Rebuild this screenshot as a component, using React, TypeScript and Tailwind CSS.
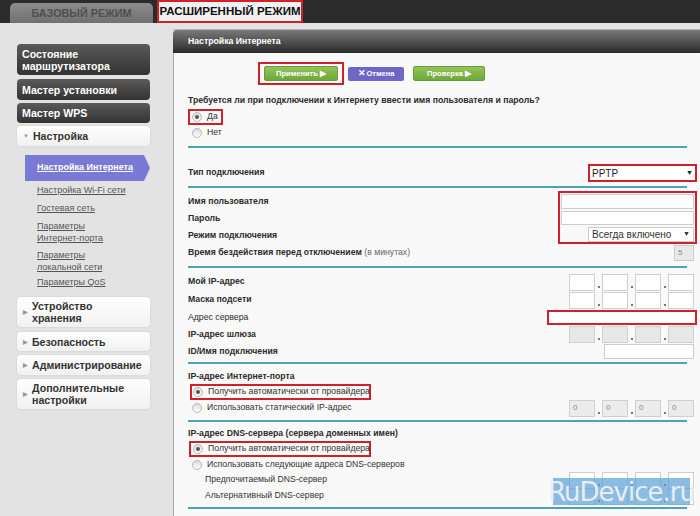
import React from "react";

function Radio({ checked }: { checked?: boolean }) {
  return (
    <span className="inline-flex w-[10px] h-[10px] rounded-full border border-[#b8b8b8] bg-gradient-to-b from-[#dcdcdc] to-white items-center justify-center shrink-0">
      {checked && <span className="w-[4px] h-[4px] rounded-full bg-[#555]" />}
    </span>
  );
}

function Teal() {
  return <div className="h-[2px] bg-[#4aa3b8] mr-[7px]" />;
}

function IpBoxes({ bg = "bg-white", zero = false }: { bg?: string; zero?: boolean }) {
  return (
    <div className="flex items-end">
      {[0, 1, 2, 3].map((i) => (
        <React.Fragment key={i}>
          {i > 0 && (
            <span className="w-[7px] h-[17px] flex items-end justify-center pb-[3px]">
              <span className="w-[2px] h-[2px] bg-[#777]" />
            </span>
          )}
          <div
            className={`w-[26px] h-[17px] border border-[#cfcfcf] ${bg} text-[8px] text-[#888] pl-[3px] flex items-center`}
          >
            {zero ? "0" : ""}
          </div>
        </React.Fragment>
      ))}
    </div>
  );
}

function Row({ label, children, h = "h-[17px]", bold = true, extra }: { label: string; children?: React.ReactNode; h?: string; bold?: boolean; extra?: string }) {
  return (
    <div className={`flex items-center justify-between ${h}`}>
      <span className={`text-[8.7px] whitespace-nowrap text-[#2b2b2b] ${bold ? "font-bold" : ""}`}>
        {label}
        {extra && <span className="font-normal text-[#666]"> {extra}</span>}
      </span>
      {children}
    </div>
  );
}

function DarkBtn({ children, h }: { children: React.ReactNode; h: string }) {
  return (
    <div className={`${h} rounded-[4px] bg-gradient-to-b from-[#5a5a5a] to-[#333] text-white font-bold text-[10.6px] leading-[12px] pl-[5px] flex items-center`}>
      <div>{children}</div>
    </div>
  );
}

function LightBtn({ children, h, open }: { children: React.ReactNode; h: string; open?: boolean }) {
  return (
    <div className={`${h} rounded-[4px] bg-gradient-to-b from-white to-[#f1f1f1] shadow-[0_0_2px_rgba(0,0,0,0.12)] text-[#333] font-bold text-[10.6px] leading-[12px] pl-[6px] flex items-center gap-[4px]`}>
      <span className="text-[6px] text-[#999]">{open ? "▼" : "▶"}</span>
      <div className="whitespace-nowrap">{children}</div>
    </div>
  );
}

function SubLink({ children, mt }: { children: React.ReactNode; mt: string }) {
  return (
    <div className={`${mt} ml-[20px] text-[9px] leading-[12px] text-[#555] underline`}>{children}</div>
  );
}

function GreenBtn({ children, w }: { children: React.ReactNode; w: string }) {
  return (
    <div className={`${w} h-[15px] rounded-[2px] bg-gradient-to-b from-[#93c45a] to-[#6fa83a] border border-[#6a9c3a] text-white text-[7.5px] font-bold flex items-center justify-center`}>
      {children}
    </div>
  );
}

const txt = "text-[8.7px] text-[#333] whitespace-nowrap";

export default function App() {
  return (
    <div className="w-[700px] h-[516px] overflow-hidden bg-[#e3e3e3] font-['Liberation_Sans',Arial,sans-serif] relative">
      {/* top bar */}
      <div className="h-[23px] bg-[#2b2b2b] flex items-end pl-[10px] gap-[4px]">
        <div className="w-[143px] h-[20px] rounded-t-[5px] bg-gradient-to-b from-[#8c8c8c] to-[#707070] text-[#4f4f4f] font-bold text-[10.8px] flex items-center justify-center">
          БАЗОВЫЙ РЕЖИМ
        </div>
        <div className="w-[146px] h-[23px] border-2 border-[#d0202c] bg-[#f0f0f0] text-[#111] font-bold text-[11.5px] flex items-center justify-center">
          РАСШИРЕННЫЙ РЕЖИМ
        </div>
      </div>

      <div className="flex">
        {/* sidebar */}
        <div className="w-[173px] shrink-0 pt-[21px] pl-[17px] pr-[23px]">
          <DarkBtn h="h-[31px]">
            Состояние
            <br />
            маршрутизатора
          </DarkBtn>
          <div className="mt-[4px]">
            <DarkBtn h="h-[21px]">Мастер установки</DarkBtn>
          </div>
          <div className="mt-[3px]">
            <DarkBtn h="h-[20px]">Мастер WPS</DarkBtn>
          </div>
          <div className="mt-[3px]">
            <LightBtn h="h-[20px]" open>
              Настройка
            </LightBtn>
          </div>
          <div className="mt-[9px] ml-[8px] h-[26px] flex">
            <div className="flex-1 bg-[#7b79d6] flex items-center pl-[12px] text-white font-bold text-[9px] underline">
              Настройка Интернета
            </div>
            <svg width="6" height="26" viewBox="0 0 6 26" className="shrink-0">
              <polygon points="0,0 6,13 0,26" fill="#7b79d6" />
            </svg>
          </div>
          <SubLink mt="mt-[3px]">Настройка Wi-Fi сети</SubLink>
          <SubLink mt="mt-[6px]">Гостевая сеть</SubLink>
          <SubLink mt="mt-[6px]">
            Параметры
            <br />
            Интернет-порта
          </SubLink>
          <SubLink mt="mt-[5px]">
            Параметры
            <br />
            локальной сети
          </SubLink>
          <SubLink mt="mt-[3px]">Параметры QoS</SubLink>
          <div className="mt-[9px]">
            <LightBtn h="h-[30px]">
              Устройство
              <br />
              хранения
            </LightBtn>
          </div>
          <div className="mt-[5px]">
            <LightBtn h="h-[19px]">Безопасность</LightBtn>
          </div>
          <div className="mt-[4px]">
            <LightBtn h="h-[20px]">Администрирование</LightBtn>
          </div>
          <div className="mt-[4px]">
            <LightBtn h="h-[30px]">
              Дополнительные
              <br />
              настройки
            </LightBtn>
          </div>
        </div>

        {/* main panel */}
        <div className="flex-1 pt-[6px]">
          <div className="h-[1px] bg-[#b5b5b5]" />
          <div className="h-[23px] rounded-tl-[4px] bg-gradient-to-b from-[#7a7a7a] to-[#2c2c2c] text-white font-bold text-[8.7px] flex items-center pl-[15px]">
            Настройка Интернета
          </div>
          <div className="h-[470px] bg-[#f9f9f9] border-l border-[#a8a8a8] pl-[14px] pr-[6px]">
            {/* buttons */}
            <div className="pt-[9px] flex items-center gap-[4px] pl-[70px]">
              <div className="border-2 border-[#d0202c] h-[23px] px-[4px] flex items-center">
                <GreenBtn w="w-[74px]">Применить ▶</GreenBtn>
              </div>
              <div className="w-[56px] h-[14px] rounded-[2px] bg-[#6f66c8] text-white text-[7.5px] font-bold flex items-center justify-center">
                <span className="text-[9px] mr-[1px]">✕</span>Отмена
              </div>
              <div className="ml-[5px]">
                <GreenBtn w="w-[72px]">Проверка ▶</GreenBtn>
              </div>
            </div>
            <div className="mt-[10px] h-[12px] flex items-center text-[8.7px] text-[#2b2b2b] font-bold whitespace-nowrap">
              Требуется ли при подключении к Интернету ввести имя пользователя и пароль?
            </div>
            <div className={`mt-[2px] h-[16px] w-[35px] border-2 border-[#d0202c] flex items-center gap-[5px] pl-[2px] ${txt}`}>
              <Radio checked />
              Да
            </div>
            <div className={`h-[16px] flex items-center gap-[5px] pl-[4px] ${txt}`}>
              <Radio />
              Нет
            </div>
            <div className="mt-[5px]">
              <Teal />
            </div>

            {/* connection type */}
            <div className="mt-[16px]">
              <Row label="Тип подключения" h="h-[18px]">
                <div className="w-[109px] h-[18px] border-2 border-[#d0202c] bg-white flex items-center justify-between px-[2px] text-[10px] text-[#222] mr-[-3px]">
                  PPTP<span className="text-[7px]">▼</span>
                </div>
              </Row>
            </div>
            <div className="mt-[4px]">
              <Teal />
            </div>

            {/* user / password */}
            <div className="mt-[3px] flex justify-between">
              <div className="pt-[2px]">
                <Row label="Имя пользователя" />
                <Row label="Пароль" />
                <Row label="Режим подключения" />
              </div>
              <div className="w-[139px] h-[53px] border-2 border-[#d0202c] mr-[-3px] flex flex-col items-end pr-[1px] pt-[1px] gap-[2px]">
                <div className="w-[133px] h-[15px] border border-[#ccc] bg-white" />
                <div className="w-[133px] h-[15px] border border-[#ccc] bg-white" />
                <div className="w-[106px] h-[15px] border border-[#ccc] bg-white flex items-center justify-between px-[3px] text-[10px] text-[#333]">
                  Всегда включено<span className="text-[7px]">▼</span>
                </div>
              </div>
            </div>
            <Row label="Время бездействия перед отключением" extra="(в минутах)">
              <div className="w-[20px] h-[16px] border border-[#ccc] bg-[#e9e9e9] text-[8px] text-[#888] pl-[3px] flex items-center">5</div>
            </Row>
            <div className="mt-[5px]">
              <Teal />
            </div>

            {/* IP settings */}
            <div className="mt-[5px]">
              <Row label="Мой IP-адрес" h="h-[18px]">
                <IpBoxes />
              </Row>
              <Row label="Маска подсети" h="h-[18px]">
                <IpBoxes />
              </Row>
              <Row label="Адрес сервера" bold={false}>
                <div className="w-[150px] h-[15px] border-2 border-[#d0202c] bg-white mr-[-3px]" />
              </Row>
              <Row label="IP-адрес шлюза">
                <IpBoxes bg="bg-[#e8e8e8]" />
              </Row>
              <Row label="ID/Имя подключения">
                <div className="w-[90px] h-[15px] border border-[#ccc] bg-white" />
              </Row>
            </div>
            <div className="mt-[2px]">
              <Teal />
            </div>

            {/* Internet port IP */}
            <div className="mt-[6px] h-[14px] flex items-center text-[8.7px] font-bold text-[#2b2b2b]">
              IP-адрес Интернет-порта
            </div>
            <div className={`h-[16px] w-[181px] border-2 border-[#d0202c] ml-[2px] flex items-center gap-[5px] pl-[1px] ${txt}`}>
              <Radio checked />
              Получить автоматически от провайдера
            </div>
            <div className="h-[16px] flex items-center justify-between">
              <div className={`flex items-center gap-[5px] pl-[4px] ${txt}`}>
                <Radio />
                Использовать статический IP-адрес
              </div>
              <IpBoxes bg="bg-[#ececec]" zero />
            </div>
            <div className="mt-[4px]">
              <Teal />
            </div>

            {/* DNS */}
            <div className="mt-[5px] h-[14px] flex items-center text-[8.7px] font-bold text-[#2b2b2b]">
              IP-адрес DNS-сервера (сервера доменных имен)
            </div>
            <div className={`h-[16px] w-[182px] border-2 border-[#d0202c] ml-[1px] flex items-center gap-[5px] pl-[2px] ${txt}`}>
              <Radio checked />
              Получить автоматически от провайдера
            </div>
            <div className={`h-[15px] flex items-center gap-[5px] pl-[4px] ${txt}`}>
              <Radio />
              Использовать следующие адреса DNS-серверов
            </div>
            <div className={`h-[16px] flex items-center justify-between pl-[17px] ${txt}`}>
              Предпочитаемый DNS-сервер
              <IpBoxes />
            </div>
            <div className={`h-[16px] flex items-center justify-between pl-[17px] ${txt}`}>
              Альтернативный DNS-сервер
              <IpBoxes />
            </div>
            <div className="mt-[3px]">
              <Teal />
            </div>
          </div>
        </div>
      </div>

      {/* watermark */}
      <div className="absolute left-[553px] top-[478px] w-[137px] h-[27px] bg-[#5d9fd6]/70 flex items-center justify-center text-[#e4eef7] text-[26px] leading-none font-['DejaVu_Sans',sans-serif] tracking-[-1px]">
        RuDevice.ru
      </div>
    </div>
  );
}
